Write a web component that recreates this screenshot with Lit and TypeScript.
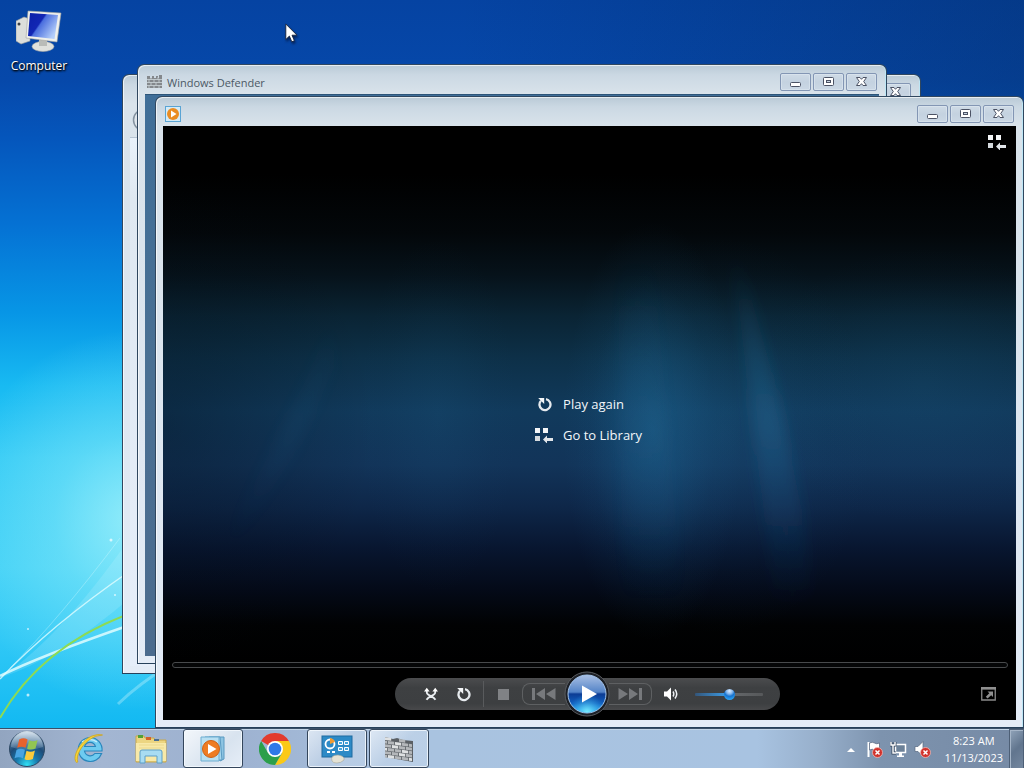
import { LitElement, html, css, svg } from "lit";
import { customElement, property } from "lit/decorators.js";

const libraryIcon = html`<svg width="18" height="15" viewBox="0 0 18 15" aria-hidden="true">
  <g fill="#f4f6f8"><rect width="5" height="5" /><rect x="8" width="5" height="5" /><rect y="8" width="5" height="5" fill="#d5dade" />
  <path d="M8 11.5 12 7.500v2.500h6v3h-6v2.500z" fill="#e2e6ea" /></g>
</svg>`;

const repeatIcon = html`<svg width="15" height="15" viewBox="0 0 15 15" aria-hidden="true">
  <path d="M9 2.200A5.500 5.500 0 1 1 4 3.800" fill="none" stroke="#e6eaee" stroke-width="2.300" />
  <path d="M1.200 1h6v6z" fill="#f4f6f8" />
</svg>`;

const wallIcon = (size: number) => {
  const rows = [0, 1, 2, 3, 4, 5];
  return html`<svg width=${size} height=${size} viewBox="0 0 30 30" aria-hidden="true">
    <path d="M1 3 9 5 13 4 19 6 29 7V28L1 23z" fill="#5b6065" />
    ${rows.map((r) =>
      [0, 1, 2, 3, 4].map((c) => {
        const x = c * 7 - (r % 2 ? 4 : 0) + 1;
        const left = Math.max(1, x);
        const right = Math.min(28, x + 6.2);
        if (right <= left || (r === 0 && c % 2)) return null;
        const y = 3 + r * 3.5;
        return svg`<path d=${`M${left} ${y + left * 0.13}L${right} ${y + right * 0.13}V${y + right * 0.13 + 2.9}L${left} ${y + left * 0.13 + 2.9}z`} fill=${(r + c) % 3 ? "#b4b7ba" : "#dfe1e2"} />`;
      })
    )}
  </svg>`;
};

@customElement("desktop-window")
class DesktopWindow extends LitElement {
  @property() heading = "";

  static styles = css`
    :host {
      display: flex;
      flex-direction: column;
      box-sizing: border-box;
      border: 1px solid #30475f;
      border-bottom-color: #26405a;
      border-radius: 7px 7px 0 0;
      padding: 0 7px 7px;
      background: linear-gradient(180deg, #b9c9d6 0, #cbd8e3 10px, #d9e3eb 29px, #dae4ed 180px, #e4ecf7 100%);
      box-shadow: inset 1px 1px 0 rgba(255, 255, 255, 0.65), inset -1px 0 0 #bde6f5;
    }
    .title {
      display: flex;
      flex: none;
      align-items: center;
      height: 29px;
      padding: 0 2px;
      color: #4c5965;
    }
    .title h1 {
      flex: 1;
      margin: 0;
      padding: 6px 0 0 5px;
      font-size: 11px;
      line-height: 18px;
      font-weight: 400;
    }
    .mark {
      display: flex;
      padding-top: 4px;
    }
    .buttons {
      display: flex;
      gap: 2px;
      padding-top: 5px;
    }
    button {
      display: grid;
      place-items: center;
      box-sizing: border-box;
      width: 31px;
      height: 18px;
      padding: 0;
      border: 1px solid #8396b4;
      border-radius: 2px;
      background: linear-gradient(#cfdbe6, #c4d2e0 50%, #cbd8e5);
      box-shadow: inset 0 0 0 1px rgba(225, 235, 244, 0.5);
    }
    .body {
      display: flex;
      flex: 1;
      flex-direction: column;
      min-height: 0;
    }
  `;

  render() {
    return html`
      <header class="title">
        <span class="mark"><slot name="icon"></slot></span>
        <h1>${this.heading}</h1>
        <div class="buttons">
          <button aria-label="Minimize">
            <svg width="13" height="12" viewBox="0 0 13 12"><rect x="1.5" y="6.5" width="10" height="4" rx="1" fill="#fff" stroke="#4b5264" /></svg>
          </button>
          <button aria-label="Maximize">
            <svg width="13" height="12" viewBox="0 0 13 12"><rect x="1.5" y="1.5" width="10" height="8" rx="1" fill="#fff" stroke="#4b5264" /><rect x="4.5" y="4.5" width="4" height="2" fill="#c9d5e2" stroke="#4b5264" /></svg>
          </button>
          <button aria-label="Close">
            <svg width="13" height="12" viewBox="0 0 13 12"><path d="M1.500 1.500H5L6.500 3.300 8 1.500h3.500L8.700 5.500l2.800 4H8L6.500 7.700 5 9.500H1.500l2.800-4z" fill="#fff" stroke="#4b5264" stroke-linejoin="round" /></svg>
          </button>
        </div>
      </header>
      <div class="body"><slot></slot></div>
    `;
  }
}

@customElement("media-player")
class MediaPlayer extends LitElement {
  static styles = css`
    :host {
      display: flex;
      flex: 1;
      flex-direction: column;
      min-height: 0;
      position: relative;
      background: linear-gradient(180deg, #000 8%, #03070a 18%, #06121a 25%, #0a2434 32%, #0d3048 39%, #113a5c 48%, #123459 57%, #0e2749 64%, #081630 71%, #040a18 78%, #010203 84%, #000 90%);
      color: #f3f7fa;
    }
    .rays {
      position: absolute;
      inset: 0;
      width: 100%;
      height: 100%;
    }
    button {
      display: grid;
      place-items: center;
      padding: 0;
      border: 0;
      background: none;
      color: inherit;
      font: inherit;
    }
    .top {
      display: flex;
      justify-content: flex-end;
      height: 34px;
      padding: 9px 10px 0;
      box-sizing: border-box;
      align-items: flex-start;
      position: relative;
    }
    .menu {
      display: flex;
      flex: 1;
      flex-direction: column;
      justify-content: center;
      align-items: flex-start;
      align-self: center;
      gap: 11px;
      padding: 17px 2px 0 0;
      position: relative;
    }
    .menu button {
      display: grid;
      grid-template-columns: 18px auto;
      gap: 10px;
      font-size: 13px;
      line-height: 20px;
    }
    .seek {
      appearance: none;
      box-sizing: border-box;
      height: 6px;
      margin: 0 8px 0 9px;
      border: 1px solid #484a4c;
      border-radius: 3px;
      background: #050607;
      position: relative;
    }
    .seek::-webkit-slider-thumb {
      appearance: none;
      width: 1px;
      height: 1px;
    }
    .controls {
      display: grid;
      grid-template-columns: 1fr auto 1fr;
      align-items: center;
      height: 52px;
      padding: 0 20px;
      position: relative;
    }
    .pill {
      display: flex;
      grid-column: 2;
      align-items: center;
      height: 32px;
      margin-right: 4px;
      padding: 0 17px 0 20px;
      border-radius: 16px;
      background: linear-gradient(#4b4c4e, #3e4042 30%, #3d3f41 80%, #48494b);
    }
    .tool {
      width: 32px;
      height: 30px;
    }
    .divider {
      width: 1px;
      height: 26px;
      margin: 0 0 0 4px;
      background: #595b5d;
    }
    .wide {
      width: 38px;
      height: 30px;
    }
    .skip {
      width: 43px;
      height: 22px;
      box-sizing: border-box;
      border: 1px solid #5e6062;
    }
    .back {
      border-radius: 8px 0 0 8px;
      border-right: 0;
    }
    .next {
      border-radius: 0 8px 8px 0;
      border-left: 0;
    }
    .play {
      width: 46px;
      height: 46px;
      margin: 0 -1px;
      position: relative;
    }
    .volume {
      appearance: none;
      width: 68px;
      height: 16px;
      margin: 0 0 0 5px;
      background: none;
    }
    .volume::-webkit-slider-runnable-track {
      height: 3px;
      border-radius: 1px;
      background: linear-gradient(90deg, #34567a, #3ca0ec 50%, #66696c 50%, #56585a);
    }
    .volume::-webkit-slider-thumb {
      appearance: none;
      width: 11px;
      height: 11px;
      margin-top: -4px;
      border-radius: 50%;
      background: radial-gradient(circle at 50% 18%, #dcecff 0, #86b7ec 28%, #1673cf 50%, #2ea5f4 85%);
    }
    .full {
      justify-self: end;
    }
  `;

  render() {
    return html`
      <svg class="rays" viewBox="0 0 853 594" preserveAspectRatio="none" aria-hidden="true">
        <defs>
          <radialGradient id="glow"><stop offset="0" stop-color="#2272a0" stop-opacity=".42" /><stop offset=".35" stop-color="#1e6a9a" stop-opacity=".28" /><stop offset=".7" stop-color="#1b6494" stop-opacity=".08" /><stop offset="1" stop-color="#1b6494" stop-opacity="0" /></radialGradient>
          <radialGradient id="dim"><stop offset="0" stop-color="#010a14" stop-opacity=".35" /><stop offset="1" stop-color="#010a14" stop-opacity="0" /></radialGradient>
          <linearGradient id="beam" x2="0" y2="1"><stop offset="0" stop-color="#2b7aa8" stop-opacity="0" /><stop offset=".5" stop-color="#2b7aa8" stop-opacity=".3" /><stop offset="1" stop-color="#1c4f86" stop-opacity="0" /></linearGradient>
          <filter id="soft" x="-50%" y="-10%" width="200%" height="120%"><feGaussianBlur stdDeviation="7" /></filter>
        </defs>
        <ellipse cx="0" cy="300" rx="210" ry="240" fill="url(#dim)" />
        <ellipse cx="490" cy="305" rx="90" ry="210" fill="url(#glow)" />
        <ellipse cx="560" cy="310" rx="150" ry="200" fill="url(#glow)" opacity=".4" />
        <ellipse cx="275" cy="290" rx="80" ry="180" fill="url(#glow)" opacity=".25" />
        <ellipse cx="760" cy="260" rx="170" ry="140" fill="url(#glow)" opacity=".25" />
        <path d="M568 120 588 170 615 270 640 390 650 480H612L594 330z" fill="url(#beam)" filter="url(#soft)" />
        <path d="M170 190 140 260 60 420H72L130 330 172 240z" fill="url(#beam)" opacity=".3" filter="url(#soft)" />
        <path d="M455 130H490L520 480H460z" fill="url(#beam)" opacity=".3" filter="url(#soft)" />
      </svg>
      <div class="top"><button aria-label="Switch to Library">${libraryIcon}</button></div>
      <nav class="menu" aria-label="Playback finished">
        <button>${repeatIcon}<span>Play again</span></button>
        <button>${libraryIcon}<span>Go to Library</span></button>
      </nav>
      <input class="seek" type="range" min="0" max="100" value="0" aria-label="Seek" />
      <div class="controls">
        <div class="pill">
          <button class="tool" aria-label="Shuffle">
            <svg width="14" height="14" viewBox="0 0 14 14"><path d="M2.800 3.500v2C3 9 9 8.500 11.500 12.800M11.200 3.500v2C11 9 5 8.500 2.500 12.800" fill="none" stroke="#e9edf0" stroke-width="1.800" /><path d="M0 4.500 2.800.8l2.800 3.700zM8.400 4.500l2.800-3.700L14 4.500z" fill="#fff" /></svg>
          </button>
          <button class="tool" aria-label="Repeat">${repeatIcon}</button>
          <span class="divider"></span>
          <button class="wide" aria-label="Stop"><svg width="11" height="11"><rect width="11" height="11" fill="#808285" /></svg></button>
          <button class="skip back" aria-label="Previous">
            <svg width="24" height="12" viewBox="0 0 24 12"><path d="M0 0h3v12H0zM13 0v12L4 6zM23.500 0v12L14 6z" fill="#77797c" /></svg>
          </button>
          <button class="play" aria-label="Play">
            <svg width="46" height="46" viewBox="0 0 46 46">
              <defs>
                <linearGradient id="ball" x2="0" y2="1"><stop offset="0" stop-color="#a9bfe3" /><stop offset=".45" stop-color="#5484c8" /><stop offset=".5" stop-color="#0c3c94" /><stop offset=".75" stop-color="#1160bf" /><stop offset="1" stop-color="#30b8f6" /></linearGradient>
                <radialGradient id="floor" cx=".5" cy="1" r=".5"><stop offset="0" stop-color="#7ff0ff" /><stop offset="1" stop-color="#2aa4ee" stop-opacity="0" /></radialGradient>
              </defs>
              <circle cx="23" cy="23" r="22" fill="#1d2026" stroke="#5a5d61" stroke-width="1" />
              <circle cx="23" cy="23" r="19" fill="url(#ball)" stroke="#a4c6ee" stroke-width="1" />
              <circle cx="23" cy="23" r="18.500" fill="url(#floor)" />
              <path d="M18 14.500 33 23 18 31.500z" fill="#fff" />
            </svg>
          </button>
          <button class="skip next" aria-label="Next">
            <svg width="24" height="12" viewBox="0 0 24 12"><path d="M21 0h3v12h-3zM11 0v12l9-6zM.5 0v12L10 6z" fill="#77797c" /></svg>
          </button>
          <button class="wide" aria-label="Mute">
            <svg width="15" height="14" viewBox="0 0 15 14"><path d="M0 4.500h3L7 .5v13L3 9.500H0z" fill="#fff" /><path d="M9 4.500q1.600 2.500 0 5M11 2.500q3.500 4.500 0 9" fill="none" stroke="#eef1f4" stroke-width="1.500" /></svg>
          </button>
          <input class="volume" type="range" min="0" max="100" value="50" aria-label="Volume" />
        </div>
        <button class="full" aria-label="View full screen">
          <svg width="15" height="14" viewBox="0 0 15 14"><path d="M.75 1.500h13.500v11.500H.75z" fill="none" stroke="#8a8a8a" stroke-width="1.300" /><path d="M0 0h15v2.500H0zM6.500 4.500H12V10L10.200 8.200 6.500 11.500 4.800 9.800 8.300 6.300z" fill="#8f8f8f" /></svg>
        </button>
      </div>
    `;
  }
}

@customElement("task-bar")
class TaskBar extends LitElement {
  static styles = css`
    :host {
      display: flex;
      flex: none;
      align-items: stretch;
      box-sizing: border-box;
      height: 40px;
      border-top: 1px solid #3a4f68;
      box-shadow: inset 0 1px 0 #c3d6e8;
      background: linear-gradient(90deg, #92a5c0 0, #a3b6d2 10%, #9db1d0 22%, #a9c3e0 42%, #a8c3e1 74%, #97afcb 80%, #7d93ae 86%, #768aa5 100%);
      color: #fff;
    }
    button {
      display: grid;
      place-items: center;
      box-sizing: border-box;
      padding: 0;
      border: 0;
      background: none;
      color: inherit;
      font: inherit;
    }
    .start {
      width: 59px;
      padding-right: 5px;
    }
    .apps {
      display: flex;
      flex: 1;
      gap: 2px;
    }
    .app {
      width: 60px;
    }
    .open {
      border: 1px solid #34465c;
      border-radius: 3px;
      background: linear-gradient(135deg, rgba(240, 246, 252, 0.75), rgba(200, 217, 236, 0.6) 50%, rgba(195, 214, 236, 0.6));
      box-shadow: inset 0 0 0 1px rgba(245, 250, 255, 0.8);
    }
    .active {
      background: linear-gradient(135deg, #f3f7fb, #d8e3ef 60%, #e6eef7);
    }
    .tray {
      display: flex;
      align-items: center;
      padding-right: 6px;
    }
    .tray button {
      width: 24px;
      height: 38px;
      padding-top: 2px;
    }
    .tray .clock {
      width: auto;
      padding: 0 0 0 10px;
      text-align: center;
      font-size: 11px;
      line-height: 17px;
    }
    .peek {
      width: 15px;
      border: 1px solid #4d5f76;
      border-bottom: 0;
      background: linear-gradient(135deg, #91a4ba, #61758e 50%, #74879f);
      box-shadow: inset 1px 1px 0 #a5b5c8;
    }
  `;

  render() {
    const cross = svg`<circle cx="11.500" cy="11.500" r="5" fill="#d1322c" stroke="#f0b6b2" stroke-width=".8" /><path d="M9.500 9.500l4 4M13.500 9.500l-4 4" stroke="#fff" stroke-width="1.500" />`;
    return html`
      <button class="start" aria-label="Start">
        <svg width="38" height="38" viewBox="0 0 38 38">
          <defs>
            <radialGradient id="orb" cx=".5" cy=".95" r=".9"><stop offset="0" stop-color="#30e0f5" /><stop offset=".35" stop-color="#1878ac" /><stop offset=".65" stop-color="#1e4c78" /><stop offset="1" stop-color="#6a8aa8" /></radialGradient>
            <linearGradient id="shine" x2="0" y2="1"><stop offset="0" stop-color="#e6f0f8" stop-opacity=".9" /><stop offset="1" stop-color="#b8cfe2" stop-opacity=".15" /></linearGradient>
          </defs>
          <circle cx="19" cy="19" r="17.500" fill="url(#orb)" stroke="#2e4964" />
          <path d="M3 17a16 16 0 0 1 32 0Q19 23 3 17z" fill="url(#shine)" />
          <g transform="translate(19 19) scale(1.2) translate(-19 -18.500)">
            <path d="M12.500 10.500q3.500-2 7 0l-1.700 7q-3.500-1.800-7 0z" fill="#e8622c" />
            <path d="M20.800 11.200q3.500 1.800 7-.2l-1.700 7q-3.500 1.800-7 .2z" fill="#92c552" />
            <path d="M10.300 19.200q3.500-1.800 7 0l-1.700 7q-3.500-1.800-7 0z" fill="#48a4e2" />
            <path d="M18.600 20q3.500 1.800 7-.2l-1.700 7q-3.500 1.800-7 .2z" fill="#fbcb3c" />
          </g>
        </svg>
      </button>
      <nav class="apps" aria-label="Applications">
        <button class="app" aria-label="Internet Explorer">
          <svg width="32" height="32" viewBox="0 0 32 32">
            <path d="M17 4.500a12 12 0 1 0 11.600 16h-6.800a5.800 5.800 0 0 1-10.300-2.500H29A12 12 0 0 0 17 4.500zM11.600 13.500a5.600 5.600 0 0 1 10.800 0z" fill="#6ecbf0" stroke="#2a86bc" stroke-width="1.200" fill-rule="evenodd" />
            <path d="M9 9q8-5 15 0" fill="none" stroke="#c5ecfb" stroke-width="1.500" />
            <path d="M3.500 29.500C-1.500 24 7 8 19 3q6-2.500 10.500-1-7 0-13.500 5C8 13 2.500 23 4.800 29z" fill="#f6d436" stroke="#cfa51e" stroke-width=".8" />
          </svg>
        </button>
        <button class="app" aria-label="Windows Explorer">
          <svg width="34" height="30" viewBox="0 0 34 30">
            <path d="M2 2h8l1 2h9l1 2h11v22H2z" fill="#ecd581" stroke="#c8a84c" />
            <path d="M4 1h5v3H4z" fill="#52a035" /><path d="M12 3h5v3h-5z" fill="#d4622a" /><path d="M20 5h5v2h-5z" fill="#4b6f93" />
            <path d="M2 9h30v18H2z" fill="#f8e9a8" /><path d="M5 11h25M5 14h25" stroke="#ecd98c" />
            <path d="M6 29V18q0-2 2-2h18q2 0 2 2v11h-5v-7H11v7z" fill="#a8dcf2" stroke="#5d9fc8" />
          </svg>
        </button>
        <button class="app open active" aria-label="Windows Media Player">
          <svg width="28" height="28" viewBox="0 0 28 28">
            <path d="M10 2h15v22l-4 2z" fill="#8dc4e2" stroke="#5a9ac2" /><path d="M6 2h15l2 23H6z" fill="#a9d8ee" stroke="#5a9ac2" />
            <path d="M2 2h18v24H2z" fill="#b9e0f2" stroke="#6eaed1" />
            <circle cx="12" cy="14" r="8.500" fill="#ee7c23" stroke="#cf6216" /><path d="M9 9l8.500 5L9 19z" fill="#fff" />
          </svg>
        </button>
        <button class="app" aria-label="Google Chrome">
          <svg width="32" height="32" viewBox="0 0 32 32">
            <path d="M16 16 2.140 8a16 16 0 0 1 27.720 0z" fill="#e33b2e" />
            <path d="M16 8h13.860A16 16 0 0 1 16 32l7-12z" fill="#fbc916" />
            <path d="M2.140 8 9.070 20 16 24l6.930-4L16 32A16 16 0 0 1 2.140 8z" fill="#2c9f4b" />
            <circle cx="16" cy="16" r="8" fill="#fff" /><circle cx="16" cy="16" r="6.300" fill="#2f79e8" />
          </svg>
        </button>
        <button class="app open" aria-label="Control Panel">
          <svg width="32" height="30" viewBox="0 0 32 30">
            <rect x="1" y="2" width="30" height="21" fill="#2d8ac6" stroke="#1f6ba0" />
            <circle cx="9" cy="10" r="4.500" fill="none" stroke="#fff" stroke-width="1.800" /><path d="M9 10V4a6 6 0 0 1 5 4z" fill="#f19b32" />
            <path d="M17.500 7.500h4v3h-4zM23.500 7.500h4v3h-4zM17.500 13.500h4v3h-4zM23.500 13.500h4v3h-4z" fill="#4aa6dc" stroke="#fff" />
            <path d="M6 18h3M11 18h3" stroke="#fff" stroke-width="2" />
            <path d="M11 27q-2-6 6-6 7 1 6 5-3 3-7 3-4 0-5-2z" fill="#e4e2d4" stroke="#a8a799" stroke-width=".6" />
          </svg>
        </button>
        <button class="app open" aria-label="Windows Defender">${wallIcon(30)}</button>
      </nav>
      <div class="tray">
        <button aria-label="Show hidden icons"><svg width="8" height="4"><path d="M0 4 4 0l4 4z" fill="#fff" /></svg></button>
        <button aria-label="Action Center">
          <svg width="17" height="17" viewBox="0 0 17 17"><path d="M2.500 1v15" stroke="#fff" stroke-width="2" /><path d="M3.500 2q3-1.500 5 0t5 0v7q-3 1.500-5 0t-5 0z" fill="#fff" stroke="#50607a" stroke-width=".7" />${cross}</svg>
        </button>
        <button aria-label="Network">
          <svg width="17" height="17" viewBox="0 0 17 17"><path d="M5.500 3.500h10v8h-10z" fill="#6c8198" stroke="#fff" stroke-width="1.500" /><path d="M9 12h3v3H9zM7 14.500h7v1.500H7z" fill="#fff" /><path d="M1 1v3h4V1M3 4v8h3" fill="none" stroke="#394a60" stroke-width="3" /><path d="M1 1v3h4V1M3 4v8h3" fill="none" stroke="#fff" stroke-width="1.400" /></svg>
        </button>
        <button aria-label="Volume muted">
          <svg width="17" height="17" viewBox="0 0 17 17"><path d="M1 5.500h3l5-5v15l-5-5H1z" fill="#fff" stroke="#56677f" stroke-width=".7" />${cross}</svg>
        </button>
        <button class="clock"><time datetime="2023-11-13T08:23">8:23 AM<br />11/13/2023</time></button>
      </div>
      <button class="peek" aria-label="Show desktop"></button>
    `;
  }
}

@customElement("app-root")
class AppRoot extends LitElement {
  static styles = css`
    :host {
      display: flex;
      flex-direction: column;
      height: 100vh;
      overflow: hidden;
      font-family: "Open Sans", "Noto Sans", sans-serif;
      font-size: 12px;
    }
    .desktop {
      flex: 1;
      min-height: 0;
      position: relative;
      overflow: hidden;
      background:
        radial-gradient(ellipse 180px 190px at 135px 520px, rgba(175, 246, 252, 0.75), rgba(150, 238, 250, 0.4) 45%, transparent),
        linear-gradient(90deg, transparent 45%, rgba(4, 40, 90, 0.35)),
        linear-gradient(180deg, #0543a2 0, #0648aa 11%, #0556bc 19%, #0572d4 31%, #0796e6 43%, #18baf2 53%, #32caf5 63%, #3fd0f6 78%, #30c8f6 88%, #12b9f2 100%);
    }
    .light {
      position: absolute;
      left: 0;
      bottom: 0;
    }
    .shortcut {
      display: grid;
      justify-items: center;
      gap: 4px;
      width: 78px;
      padding-top: 10px;
      color: #fff;
      text-decoration: none;
      line-height: 16px;
      text-shadow: 1px 1px 2px #000, 0 1px 2px #000;
    }
    .window {
      position: absolute;
    }
    .control-panel {
      top: 74px;
      right: 103px;
      bottom: 54px;
      left: 122px;
    }
    .defender {
      top: 64px;
      right: 137px;
      bottom: 64px;
      left: 137px;
    }
    .player {
      top: 96px;
      right: 0;
      bottom: 0;
      left: 155px;
    }
    .toolbar {
      height: 34px;
      padding: 4px 2px 0;
      box-sizing: border-box;
      border-bottom: 1px solid #b7c5d3;
    }
    .panel {
      flex: 1;
      background: linear-gradient(#e9f2fb, #dfe8f1 60px, #e6eefa);
    }
    .scan {
      flex: 1;
      border-top: 1px solid #2d5579;
      background: linear-gradient(#3f6e98, #4a7093 50%, #4b6b8e);
    }
    .cursor {
      position: absolute;
      top: 23px;
      left: 285px;
      filter: drop-shadow(1px 2px 1px rgba(0, 10, 40, 0.6));
    }
  `;

  render() {
    return html`
      <main class="desktop">
        <svg class="light" width="170" height="230" viewBox="0 0 170 230" aria-hidden="true">
          <path d="M0 180Q60 140 130 40V100Q60 160 0 180z" fill="#d8fbff" opacity=".16" />
          <g fill="none" stroke="#e9ffff">
            <path d="M0 181Q50 128 130 73" stroke-width="1.500" opacity=".75" />
            <path d="M0 178Q40 158 130 127" stroke-width="2.500" opacity=".8" />
            <path d="M10 170Q60 120 120 40" opacity=".3" />
            <path d="M118 206Q140 185 168 168" opacity=".3" stroke-width="3" />
          </g>
          <path d="M0 220Q40 150 126 117" fill="none" stroke="#8edb52" stroke-width="2" />
          <g fill="#fff" opacity=".7"><circle cx="111" cy="42" r="1.500" /><circle cx="28" cy="197" r="1.500" /><circle cx="115" cy="97" r="1" /><circle cx="28" cy="131" r="1" /></g>
        </svg>
        <a class="shortcut" href="#computer">
          <svg width="46" height="44" viewBox="0 0 46 44" aria-hidden="true">
            <defs><linearGradient id="screen" x2="1" y2=".6"><stop offset="0" stop-color="#0a1fa8" /><stop offset=".45" stop-color="#1226b4" /><stop offset=".5" stop-color="#4a6ede" /><stop offset="1" stop-color="#b4cefa" /></linearGradient></defs>
            <path d="M0 11 8 7l6 2v22L5 34 0 31z" fill="#dcdedb" stroke="#999c9b" stroke-width=".6" /><circle cx="3" cy="14" r="1.500" fill="#3a3f44" />
            <ellipse cx="27" cy="36.500" rx="11" ry="5" fill="#dfe1dd" stroke="#a8aaa6" stroke-width=".6" /><path d="M23 28h8v8h-8z" fill="#b9bcb8" />
            <path d="M12 1 45 3 41 32 10 28z" fill="#eff0ec" stroke="#a3a5a0" stroke-width=".6" />
            <path d="M14 3 42 5 38.500 29 12 26z" fill="url(#screen)" />
          </svg>
          Computer
        </a>
        <desktop-window class="window control-panel">
          <div class="toolbar">
            <svg width="24" height="24" viewBox="0 0 24 24" aria-hidden="true"><circle cx="12" cy="12" r="10.500" fill="#dfe6ec" stroke="#8593a0" stroke-width="1.500" /><path d="M13 7 8 12l5 5M8 12h9" fill="none" stroke="#a9b5c0" stroke-width="2" /></svg>
          </div>
          <div class="panel"></div>
        </desktop-window>
        <desktop-window class="window defender" heading="Windows Defender">
          <svg slot="icon" width="15" height="14" viewBox="0 0 15 14" aria-hidden="true">
            <path d="M0 1h3v2h2V1h2v2h2V1h2v2h1V0h3v13H0z" fill="#84888c" />
            <path d="M0 4.500h15M0 7.500h15M0 10.500h15M4 2v2.500M11 2v2.500M2 4.500v3M7 4.500v3M12 4.500v3M4 7.500v3M9 7.500v3M2 10.500V13M7 10.500V13M12 10.500V13" stroke="#cdd5db" stroke-width=".8" />
          </svg>
          <div class="scan"></div>
        </desktop-window>
        <desktop-window class="window player">
          <svg slot="icon" width="16" height="16" viewBox="0 0 16 16" aria-hidden="true">
            <rect x=".5" y=".5" width="15" height="15" fill="#d4ebf7" stroke="#5aa4d4" /><circle cx="8" cy="8" r="6" fill="#ea8c22" /><path d="M6 4.500 11.500 8 6 11.500z" fill="#fff" />
          </svg>
          <media-player></media-player>
        </desktop-window>
        <svg class="cursor" width="13" height="21" viewBox="0 0 13 21" aria-hidden="true">
          <path d="M.8 1v15.500l3.600-3.400 2.400 5.700 2.600-1.100L7 12.200h5z" fill="#fff" stroke="#16233a" stroke-width=".9" />
        </svg>
      </main>
      <task-bar></task-bar>
    `;
  }
}
